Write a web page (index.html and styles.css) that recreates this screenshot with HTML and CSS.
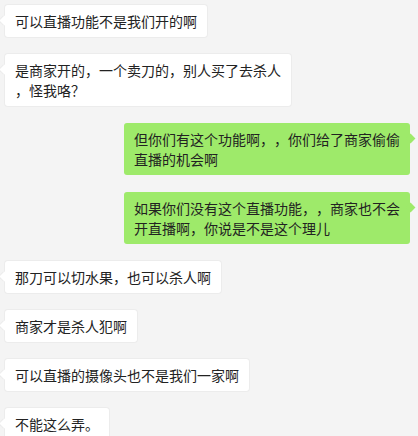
FILE: index.html
```html
<!DOCTYPE html>
<html lang="zh-CN">
<head>
    <meta charset="UTF-8">
    <meta name="viewport" content="width=device-width, initial-scale=1.0">
    <title>聊天记录</title>
    <link rel="stylesheet" href="styles.css">
</head>
<body>

    <!-- 聊天列表 -->
    <div class="chat">
        <div class="msg left"><div class="bubble">可以直播功能不是我们开的啊</div></div>
        <div class="msg left"><div class="bubble">是商家开的，一个卖刀的，别人买了去杀人<br>，怪我咯？</div></div>
        <div class="msg right"><div class="bubble">但你们有这个功能啊，，你们给了商家偷偷<br>直播的机会啊</div></div>
        <div class="msg right"><div class="bubble">如果你们没有这个直播功能，，商家也不会<br>开直播啊，你说是不是这个理儿</div></div>
        <div class="msg left"><div class="bubble">那刀可以切水果，也可以杀人啊</div></div>
        <div class="msg left"><div class="bubble">商家才是杀人犯啊</div></div>
        <div class="msg left"><div class="bubble">可以直播的摄像头也不是我们一家啊</div></div>
        <div class="msg left"><div class="bubble">不能这么弄。</div></div>
    </div>

</body>
</html>
```

FILE: styles.css
```css
body {
    margin: 0;
    height: 100vh;
    background-color: #f4f4f4;
    overflow: hidden;
    font-family: "Noto Sans CJK SC", "Noto Sans", sans-serif;
}

.chat {
    display: flex;
    flex-direction: column;
    gap: 17px;
    padding: 5px 8px 0 5px;
}

.msg {
    display: flex;
}

.msg.right {
    justify-content: flex-end;
}

.bubble {
    position: relative;
    padding: 6px 10px;
    font-size: 14px;
    line-height: 20px;
    color: #222;
    border-radius: 3px;
    white-space: nowrap;
    text-spacing-trim: space-all; /* 전각 문장부호 그대로 */
}

.left .bubble {
    background-color: #fff;
    box-shadow: 0 0 0 1px #ececec;
}

.right .bubble {
    background-color: #9eea6a;
}

/* 말풍선 꼬리 */
.bubble::before {
    content: "";
    position: absolute;
    top: 12px;
    width: 7px;
    height: 7px;
    transform: rotate(45deg);
}

.left .bubble::before {
    left: -4px;
    background-color: #fff;
    box-shadow: -1px 1px 0 0 #ececec;
}

.right .bubble::before {
    right: -4px;
    background-color: #9eea6a;
}
```
